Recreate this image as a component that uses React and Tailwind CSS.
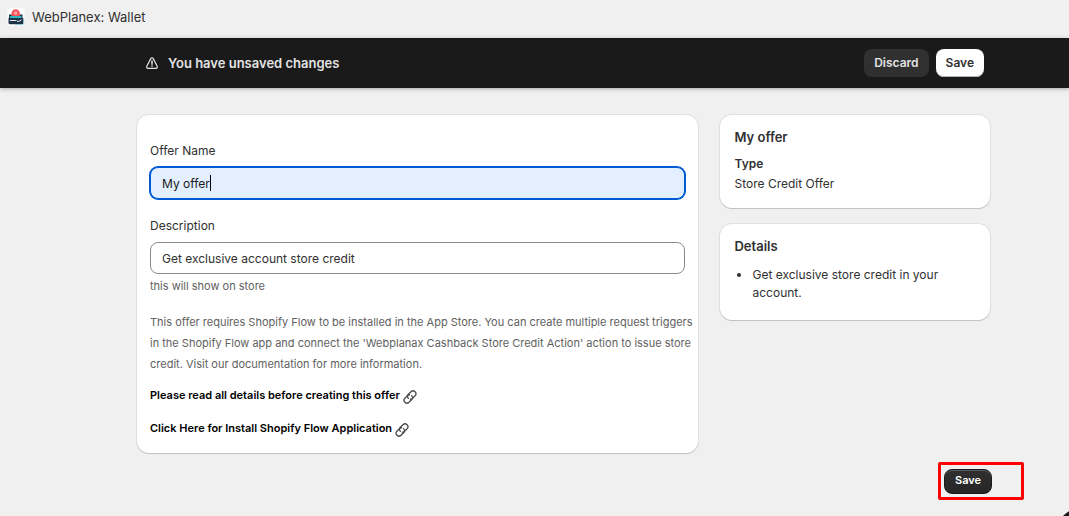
import React, { useState } from 'react';

const WalletIcon = () => (
  <svg className="h-5 w-5" viewBox="0 0 20 20" aria-hidden="true">
    <rect x="1.5" y="1" width="17" height="18" rx="4" fill="#ffffff" />
    <path d="M8 18.5h7.5a3 3 0 0 0 3-3V12z" fill="#c5f1f7" />
    <path d="M3 7.5h13.5V12H3z" fill="#213447" />
    <path d="M4 9h11.5v2H4z" fill="#29b8bd" />
    <path d="M5.5 9V6.5a4.2 4.2 0 0 1 8.4 0V9z" fill="#f9545b" />
    <circle cx="9.7" cy="6" r="1.8" fill="#fda5a8" />
    <path d="M2.5 11h14.8v5a1.3 1.3 0 0 1-1.3 1.3H3.8A1.3 1.3 0 0 1 2.5 16z" fill="#213447" />
    <path d="M4 13.5h6.5M11 14.3h2l2.5-1.3" fill="none" stroke="#d8f0f5" strokeWidth="1" />
  </svg>
);

const WarningIcon = () => (
  <svg
    className="h-4 w-4"
    viewBox="0 0 16 16"
    fill="none"
    stroke="currentColor"
    strokeWidth="1.2"
    strokeLinecap="round"
    strokeLinejoin="round"
    aria-hidden="true"
  >
    <path d="M6.9 3.4 2.8 11.2a1.4 1.4 0 0 0 1.2 2.1h8a1.4 1.4 0 0 0 1.2-2.1L9.1 3.4a1.25 1.25 0 0 0-2.2 0z" />
    <path d="M8 6v3.2M8 11.1v.1" strokeWidth="1.5" />
  </svg>
);

const ChainIcon = () => (
  <svg
    className="mt-1 h-4 w-4 text-[#4a4a4a]"
    viewBox="0 0 16 16"
    fill="none"
    stroke="currentColor"
    strokeWidth="1.3"
    strokeLinecap="round"
    aria-hidden="true"
  >
    <path d="M6.4 9.4a2.9 2.9 0 0 1 0-4.1l2.6-2.6a2.9 2.9 0 0 1 4.1 4.1l-2.6 2.6a2.9 2.9 0 0 1-2 .85" />
    <path d="M9.6 6.6a2.9 2.9 0 0 1 0 4.1l-2.6 2.6a2.9 2.9 0 0 1-4.1-4.1l2.6-2.6a2.9 2.9 0 0 1 2-.85" />
  </svg>
);

const Card = ({ className, children }) => (
  <section
    className={`rounded-xl bg-white shadow-[0_1px_1px_rgba(0,0,0,0.15),0_0_0_1px_rgba(0,0,0,0.06)] ${className}`}
  >
    {children}
  </section>
);

const DocLink = ({ children }) => (
  <a href="#" className="flex items-center gap-0.5 text-[11px] leading-5 font-semibold text-black">
    {children}
    <ChainIcon />
  </a>
);

const SaveBar = () => (
  <div className="bg-[#1a1a1a] pr-[85px] pl-36 shadow-[0_1px_4px_rgba(0,0,0,0.3)]">
    <div className="flex h-[50px] items-center justify-between">
      <div className="flex items-center gap-2 text-[#e3e3e3]">
        <WarningIcon />
        <p className="text-[13px] leading-5 font-semibold">You have unsaved changes</p>
      </div>
      <div className="flex gap-[7px]">
        <button
          type="button"
          className="h-7 rounded-lg bg-[#303030] px-2.5 text-xs font-semibold text-[#e3e3e3]"
        >
          Discard
        </button>
        <button
          type="button"
          className="h-7 rounded-lg bg-white px-2.5 text-xs font-semibold text-[#303030] shadow-[inset_0_-1px_0_#b5b5b5]"
        >
          Save
        </button>
      </div>
    </div>
  </div>
);

const App = () => {
  const [name, setName] = useState('My offer');
  const [description, setDescription] = useState('Get exclusive account store credit');

  return (
    <div className="relative min-h-screen overflow-hidden bg-[#f0f0f0] font-['Inter',sans-serif] text-[13px] leading-5 text-[#303030]">
      <header className="flex h-[38px] items-center gap-1.5 px-1.5 pb-1">
        <WalletIcon />
        <h1 className="text-[13px]">WebPlanex: Wallet</h1>
      </header>

      <SaveBar />

      <main className="pt-[27px] pr-[79px] pl-[137px]">
        <div className="grid grid-cols-[25fr_12fr] items-start gap-[22px]">
          <Card className="px-[13px] pt-[26px] pb-[15px]">
            <label htmlFor="offer-name" className="block text-xs leading-5">
              Offer Name
            </label>
            <div className="relative mt-1.5">
              <input
                id="offer-name"
                type="text"
                value={name}
                onChange={(e) => setName(e.target.value)}
                className="block h-8 w-full rounded-lg border border-[#005bd3] bg-[#e3effe] px-[11px] text-xs text-[#1a1a1a] caret-transparent ring-1 ring-[#005bd3] outline-none"
              />
              {/* Text cursor after the typed value */}
              <span
                aria-hidden="true"
                className="pointer-events-none absolute top-2 left-3 h-4 border-r border-black text-xs text-transparent"
              >
                {name}
              </span>
            </div>

            <label htmlFor="offer-description" className="mt-[17px] block text-xs leading-5">
              Description
            </label>
            <input
              id="offer-description"
              type="text"
              value={description}
              onChange={(e) => setDescription(e.target.value)}
              aria-describedby="description-help"
              className="mt-1.5 block h-8 w-full rounded-lg border border-[#8a8a8a] bg-white px-[11px] text-xs outline-none"
            />
            <p id="description-help" className="mt-0.5 text-[11px] leading-5 text-[#616161]">
              this will show on store
            </p>

            <p className="mt-4 -mr-3 text-[11px] leading-[21px] text-[#616161]">
              This offer requires Shopify Flow to be installed in the App Store. You can create
              multiple request triggers in the Shopify Flow app and connect the 'Webplanax Cashback
              Store Credit Action' action to issue store credit. Visit our documentation for more
              information.
            </p>

            <div className="mt-2.5 space-y-[13px]">
              <DocLink>Please read all details before creating this offer</DocLink>
              <DocLink>Click Here for Install Shopify Flow Application</DocLink>
            </div>
          </Card>

          <aside className="space-y-4">
            <Card className="px-3.5 pt-3 pb-3.5">
              <h2 className="font-semibold">My offer</h2>
              <h3 className="mt-[7px] text-xs leading-5 font-semibold">Type</h3>
              <p className="text-xs leading-5">Store Credit Offer</p>
            </Card>
            <Card className="px-3.5 pt-3 pb-[18px]">
              <h2 className="font-semibold">Details</h2>
              <ul className="mt-2.5 list-disc pl-[18px] text-xs leading-[18px]">
                <li>Get exclusive store credit in your account.</li>
              </ul>
            </Card>
          </aside>
        </div>
      </main>

      <div className="mt-[9px] flex justify-end pr-[45px]">
        <div className="flex h-[38px] w-[86px] items-center rounded-xs border-3 border-[#ff0000] px-[3px]">
          <button
            type="button"
            className="h-[25px] rounded-lg border border-[#1a1a1a] bg-linear-to-b from-[#303030] to-[#262626] px-2.5 pb-0.5 text-[11px] font-semibold text-white shadow-[inset_0_1px_0_#5a5a5a]"
          >
            Save
          </button>
        </div>
      </div>

      {/* Chat bubble peeking in at the corner */}
      <div className="absolute -right-9 -bottom-10 h-12 w-12 rounded-full bg-[#1a1a1a]" />
    </div>
  );
};

export default App;
